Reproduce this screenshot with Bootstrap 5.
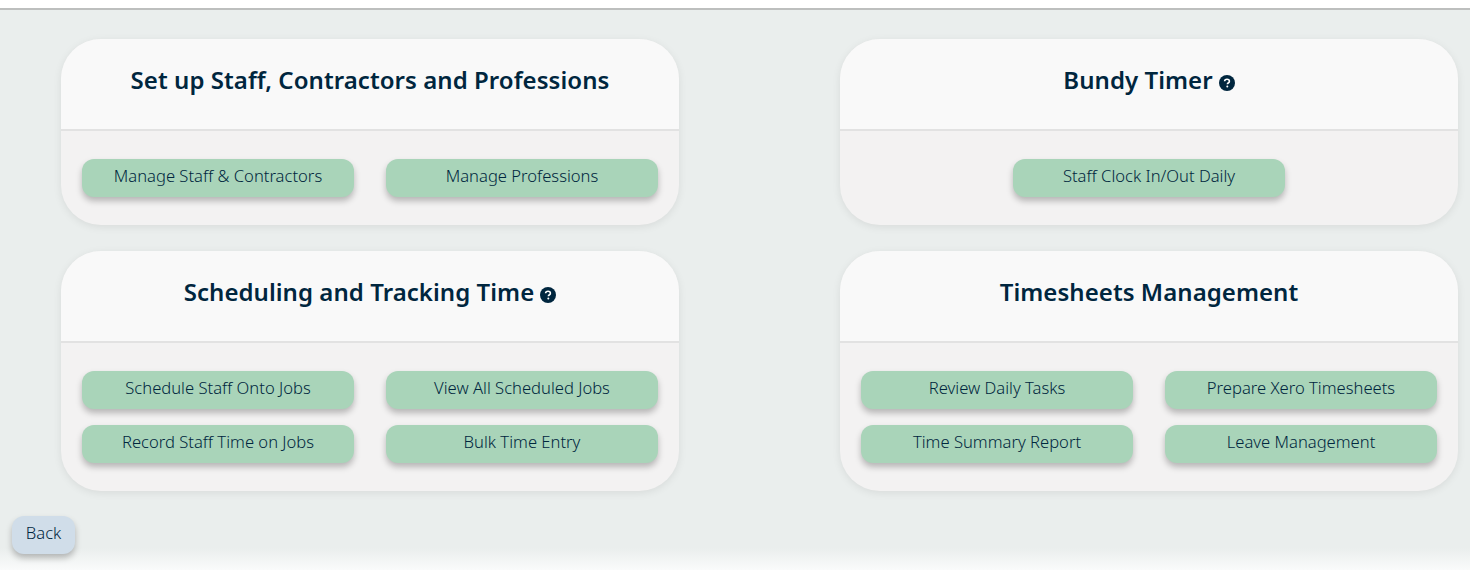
<!DOCTYPE html>
<html lang="en">
<head>
    <title>Staff</title>
    <link href="https://cdn.jsdelivr.net/npm/bootstrap@5.3.3/dist/css/bootstrap.min.css" rel="stylesheet">
    <style>
        html, body { height: 570px; overflow: hidden; }
        body { background: #fff; font-family: "Noto Sans", "Liberation Sans", sans-serif; color: #00263e; }
        .page-wrap { margin-top: 8px; height: 562px; border-top: 2px solid #bdbfbe; padding: 29px 12px 0 61px;
            background: linear-gradient(#eaeeed 0, #eaeeed 538px, #fafbfb 560px); }
        .panel-grid { display: grid; grid-template-columns: 618px 618px; column-gap: 161px; row-gap: 26px; }
        .panel-box { border: 0; border-radius: 40px; background: #f3f2f2; box-shadow: 0 2px 8px rgba(0,0,0,.08); overflow: hidden; }
        .panel-box .card-header { height: 92px; background: #f9f9f9; border-bottom: 2px solid #e2e2e2; border-radius: 0;
            display: flex; align-items: center; justify-content: center; gap: 6px; padding: 0 0 8px; }
        .panel-box h2 { margin: 0; font-size: 24px; font-weight: 600; letter-spacing: .05px; color: #00263e; line-height: 1; }
        .panel-box .card-body { padding: 28px 21px; display: grid; grid-template-columns: 272px 272px; column-gap: 32px; row-gap: 16px; justify-content: center; }
        .act-btn { height: 38px; padding: 0 0 4px; border: 0; border-radius: 12px; background: #a9d4b9; color: #00263e;
            font-size: 16.6px; font-weight: 300; line-height: 1.2; box-shadow: 0 4px 6px rgba(0,0,0,.25); }
        .solo-btn { grid-column: 1 / span 2; width: 272px; justify-self: center; }
        .back-btn { display: block; width: 63px; height: 38px; margin: 25px 0 0 -49px; padding: 0 0 4px; border: 0; border-radius: 12px;
            background: #d0dde9; color: #00263e; font-size: 16.6px; font-weight: 300; line-height: 1.2; box-shadow: 0 4px 6px rgba(0,0,0,.25); }
        .help-ico { width: 16px; height: 16px; flex: none; margin-top: 5px; }
    </style>
</head>
<body>

<div class="page-wrap">
    <div class="panel-grid">
        <div class="card panel-box">
            <div class="card-header"><h2>Set up Staff, Contractors and Professions</h2></div>
            <div class="card-body">
                <button type="button" class="btn act-btn">Manage Staff &amp; Contractors</button>
                <button type="button" class="btn act-btn">Manage Professions</button>
            </div>
        </div>
        <div class="card panel-box">
            <div class="card-header">
                <h2>Bundy Timer</h2>
                <svg class="help-ico" viewBox="0 0 16 16"><circle cx="8" cy="8" r="8" fill="#00263e"/><path d="M5.6 6.3C5.7 4.9 6.7 4.2 8 4.2c1.4 0 2.4.8 2.4 2 0 .9-.5 1.4-1.2 1.8-.6.4-.8.6-.8 1.2" fill="none" stroke="#fff" stroke-width="1.6"/><circle cx="8.3" cy="11.6" r="1" fill="#fff"/></svg>
            </div>
            <div class="card-body">
                <button type="button" class="btn act-btn solo-btn">Staff Clock In/Out Daily</button>
            </div>
        </div>
        <div class="card panel-box">
            <div class="card-header">
                <h2>Scheduling and Tracking Time</h2>
                <svg class="help-ico" viewBox="0 0 16 16"><circle cx="8" cy="8" r="8" fill="#00263e"/><path d="M5.6 6.3C5.7 4.9 6.7 4.2 8 4.2c1.4 0 2.4.8 2.4 2 0 .9-.5 1.4-1.2 1.8-.6.4-.8.6-.8 1.2" fill="none" stroke="#fff" stroke-width="1.6"/><circle cx="8.3" cy="11.6" r="1" fill="#fff"/></svg>
            </div>
            <div class="card-body">
                <button type="button" class="btn act-btn">Schedule Staff Onto Jobs</button>
                <button type="button" class="btn act-btn">View All Scheduled Jobs</button>
                <button type="button" class="btn act-btn">Record Staff Time on Jobs</button>
                <button type="button" class="btn act-btn">Bulk Time Entry</button>
            </div>
        </div>
        <div class="card panel-box">
            <div class="card-header"><h2>Timesheets Management</h2></div>
            <div class="card-body">
                <button type="button" class="btn act-btn">Review Daily Tasks</button>
                <button type="button" class="btn act-btn">Prepare Xero Timesheets</button>
                <button type="button" class="btn act-btn">Time Summary Report</button>
                <button type="button" class="btn act-btn">Leave Management</button>
            </div>
        </div>
    </div>
    <button type="button" class="btn back-btn">Back</button>
</div>

<script src="https://cdn.jsdelivr.net/npm/bootstrap@5.3.3/dist/js/bootstrap.bundle.min.js"></script>
</body>
</html>
